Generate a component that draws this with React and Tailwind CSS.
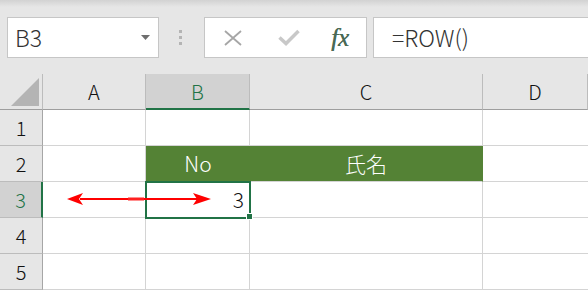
import React from 'react';

const font = { fontFamily: '"Noto Sans CJK JP", "Noto Sans", sans-serif' };

const cols = ['A', 'B', 'C', 'D'];
const rows = [1, 2, 3, 4, 5];

const Toolbar = () => (
  <div className="flex h-[74px] items-start bg-[linear-gradient(to_bottom,#d2d2d2_0px,#e6e6e6_7px)] pl-[7px] pt-[17px]">
    {/* name box */}
    <div className="flex h-[41px] w-[152px] items-center border border-[#c6c6c6] bg-white pl-[7px] pr-[8px]">
      <span className="flex-1 text-[23px] font-light leading-none text-[#333]">B3</span>
      <svg width="9" height="5" viewBox="0 0 9 5">
        <path d="M0 0 H9 L4.5 5 Z" fill="#6e6e6e" />
      </svg>
    </div>
    {/* grip dots */}
    <div className="ml-[20px] mt-[13px] flex flex-col gap-[3px]">
      <div className="h-[3px] w-[3px] bg-[#b4b4b4]" />
      <div className="h-[3px] w-[3px] bg-[#b4b4b4]" />
      <div className="h-[3px] w-[3px] bg-[#b4b4b4]" />
    </div>
    {/* cancel / enter / fx */}
    <div className="ml-[22px] flex h-[41px] w-[163px] items-center border border-[#c6c6c6] bg-white">
      <svg className="ml-[19px]" width="18" height="16" viewBox="0 0 18 16">
        <path d="M1 1 L17 15 M17 1 L1 15" stroke="#a6a6a6" strokeWidth="1.8" fill="none" />
      </svg>
      <svg className="ml-[36px]" width="22" height="17" viewBox="0 0 22 17">
        <path d="M1.5 8.5 L8 14.5 L20.5 2" stroke="#c8c8c8" strokeWidth="3.5" fill="none" />
      </svg>
      <span
        className="ml-[31px] text-[25px] italic leading-none text-[#4a6a56] [text-shadow:0.4px_0_0_#4a6a56]"
        style={{ fontFamily: '"Liberation Serif", serif' }}
      >
        fx
      </span>
    </div>
    {/* formula bar */}
    <div className="ml-[6px] flex h-[41px] flex-1 items-center border border-r-0 border-[#c6c6c6] bg-white pl-[18px]">
      <span className="text-[23px] font-light leading-none text-[#333]">=ROW()</span>
    </div>
  </div>
);

const Sheet = () => (
  <div className="relative grid grid-cols-[43px_103px_104px_233px_105px] grid-rows-[36px_repeat(5,36px)] font-light">
    {/* corner */}
    <div className="relative border-r border-b border-r-[#bcbcbc] border-b-[#9e9e9e] bg-[#e6e6e6]">
      <svg className="absolute left-[11px] top-[4px]" width="28" height="28" viewBox="0 0 28 28">
        <path d="M28 0 V28 H0 Z" fill="#b4b4b4" />
      </svg>
    </div>
    {cols.map((c) => (
      <div
        key={c}
        className={
          c === 'B'
            ? 'flex items-center justify-center border-r border-b-2 border-r-[#bcbcbc] border-b-[#217346] bg-[#d2d2d2] pt-[1px] text-[20px] text-[#217346]'
            : 'flex items-center justify-center border-r border-b border-r-[#bcbcbc] border-b-[#9e9e9e] bg-[#e6e6e6] text-[20px] text-[#111]'
        }
      >
        {c}
      </div>
    ))}
    {rows.map((r) => (
      <React.Fragment key={r}>
        <div
          className={
            r === 3
              ? 'flex items-center justify-center border-r-2 border-b border-r-[#217346] border-b-[#bcbcbc] bg-[#d2d2d2] text-[20px] text-[#217346]'
              : 'flex items-center justify-center border-r border-b border-r-[#a6a6a6] border-b-[#bcbcbc] bg-[#e6e6e6] text-[20px] text-[#111]'
          }
        >
          {r}
        </div>
        <div className="border-r border-b border-[#d4d4d4] bg-white" />
        {r === 2 ? (
          <>
            <div className="flex items-center justify-center border-b border-[#d4d4d4] bg-[#548235] text-[21px] text-white">
              No
            </div>
            <div className="flex items-center justify-center border-r border-b border-[#d4d4d4] border-r-[#548235] bg-[#548235] text-[21px] text-white">
              氏名
            </div>
          </>
        ) : r === 3 ? (
          <>
            <div className="relative flex items-center justify-end border-r border-b border-[#d4d4d4] bg-white pr-[5px] text-[21px] text-[#111]">
              3
              <div className="absolute -left-[1px] -top-[1px] h-[38px] w-[106px] border-2 border-[#217346]" />
              <div className="absolute -bottom-[3px] -right-[4px] h-[7px] w-[7px] border border-white bg-[#217346]" />
            </div>
            <div className="border-r border-b border-[#d4d4d4] bg-white" />
          </>
        ) : (
          <>
            <div className="border-r border-b border-[#d4d4d4] bg-white" />
            <div className="border-r border-b border-[#d4d4d4] bg-white" />
          </>
        )}
        <div className="border-b border-[#d4d4d4] bg-white" />
      </React.Fragment>
    ))}
    {/* red double arrow */}
    <svg className="absolute left-[66px] top-[118px]" width="146" height="14" viewBox="0 0 146 14">
      <path d="M14 7 H131" stroke="#ff0000" strokeWidth="2" />
      <path d="M62 7 H78" stroke="#ff2020" strokeWidth="3" />
      <path d="M1 7 L17 1 L13 7 L17 13 Z" fill="#ff0000" />
      <path d="M145 7 L127 1 L131 7 L127 13 Z" fill="#ff0000" />
    </svg>
  </div>
);

export default function App() {
  return (
    <div className="h-[290px] w-[588px] overflow-hidden bg-white" style={font}>
      <Toolbar />
      <Sheet />
    </div>
  );
}
